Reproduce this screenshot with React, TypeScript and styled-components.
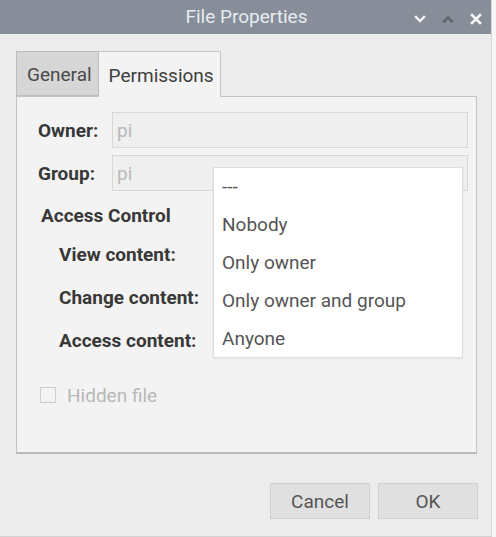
import React from "react";
import styled, { createGlobalStyle } from "styled-components";

const Global = createGlobalStyle`
  html, body { margin: 0; padding: 0; background: #f5f5f5; }
  body { font-family: Roboto, "Noto Sans", "Liberation Sans", sans-serif; }
  * { box-sizing: border-box; }
`;

const Window = styled.div`
  width: 492px;
  height: 537px;
  background: #ececec;
  border-right: 1px solid #d6d6d6;
  border-bottom: 1px solid #d2d2d2;
  display: flex;
  flex-direction: column;
`;

const TitleBar = styled.div`
  height: 34px;
  flex: none;
  background: #878e99;
  display: grid;
  grid-template-columns: 1fr auto 1fr;
  align-items: center;
`;

const Title = styled.div`
  grid-column: 2;
  color: #e8ebef;
  font-size: 19px;
  line-height: 34px;
  padding-left: 2px;
`;

const Controls = styled.div`
  grid-column: 3;
  justify-self: end;
  display: flex;
  gap: 6px;
  padding-right: 4px;
`;

const CtlButton = styled.div<{ $dim?: boolean }>`
  width: 22px;
  height: 22px;
  display: flex;
  align-items: center;
  justify-content: center;
  color: ${(p) => (p.$dim ? "#5e6570" : "#f4f6f8")};
  margin-top: 3px;
`;

const Body = styled.div`
  flex: 1;
  display: flex;
  flex-direction: column;
  padding: 17px 14px 0 16px;
`;

const Tabs = styled.div`
  display: flex;
  height: 45px;
`;

const Tab = styled.div<{ $active?: boolean }>`
  height: ${(p) => (p.$active ? "46px" : "45px")};
  padding: 2px 6px 0 10px;
  display: flex;
  align-items: center;
  font-size: 19px;
  color: ${(p) => (p.$active ? "#3d3d3d" : "#4a4a4a")};
  background: ${(p) => (p.$active ? "#f3f3f3" : "#d6d6d6")};
  border: 1px solid ${(p) => (p.$active ? "#c6c6c6" : "#bdbdbd")};
  border-bottom: ${(p) => (p.$active ? "none" : "1px solid #bdbdbd")};
  border-left: ${(p) => (p.$active ? "none" : "1px solid #bdbdbd")};
  position: relative;
  z-index: 1;
`;

const Frame = styled.div`
  position: relative;
  height: 358px;
  background: #f3f3f3;
  border: 1px solid #c4c4c4;
  border-bottom: 2px solid #b9b9b9;
  padding: 15px 8px 0 21px;
  display: flex;
  flex-direction: column;
`;

const FieldRow = styled.div`
  display: grid;
  grid-template-columns: 74px 1fr;
  align-items: center;
  height: 36px;
  & + & { margin-top: 7px; }
`;

const BoldLabel = styled.div<{ $indent?: number }>`
  font-weight: 700;
  font-size: 19px;
  color: #383838;
  padding-left: ${(p) => p.$indent ?? 0}px;
  white-space: nowrap;
`;

const Entry = styled.div`
  height: 36px;
  background: #efefef;
  border: 1px solid #d7d7d7;
  font-size: 19px;
  color: #b9b9b9;
  padding-left: 4px;
  display: flex;
  align-items: center;
`;

const Section = styled.div`
  margin-top: 13px;
  height: 22px;
  display: flex;
  align-items: center;
`;

const PermRows = styled.div`
  margin-top: 7px;
  display: flex;
  flex-direction: column;
`;

const PermRow = styled.div`
  height: 43px;
  display: flex;
  align-items: center;
`;

const CheckRow = styled.div`
  margin-top: 22px;
  height: 22px;
  display: flex;
  align-items: center;
  gap: 11px;
  padding-left: 2px;
`;

const CheckBox = styled.div`
  width: 16px;
  height: 16px;
  border: 1px solid #cfcfcf;
  background: #f3f3f3;
`;

const CheckText = styled.div`
  font-size: 19px;
  color: #b8b8b8;
`;

const Popup = styled.div`
  position: absolute;
  left: 196px;
  top: 70px;
  width: 250px;
  height: 191px;
  background: #ffffff;
  border: 1px solid #dedede;
  box-shadow: 0 1px 2px rgba(0, 0, 0, 0.08);
  display: flex;
  flex-direction: column;
`;

const MenuItem = styled.div`
  height: 38px;
  padding-left: 8px;
  display: flex;
  align-items: center;
  font-size: 19px;
  color: #555555;
`;

const ButtonBar = styled.div`
  margin-top: 29px;
  display: flex;
  justify-content: flex-end;
  gap: 8px;
  margin-right: -1px;
`;

const Button = styled.div`
  width: 100px;
  height: 36px;
  background: #e0e0e0;
  border: 1px solid #cfcfcf;
  display: flex;
  align-items: center;
  justify-content: center;
  font-size: 19px;
  color: #555555;
`;

const Chevron = ({ up }: { up?: boolean }) => (
  <svg width="12" height="8" viewBox="0 0 12 8">
    <path
      d={up ? "M2 6.5 L6 2.5 L10 6.5" : "M2 2 L6 6 L10 2"}
      fill="none"
      stroke="currentColor"
      strokeWidth="2.4"
      strokeLinecap="square"
    />
  </svg>
);

const Close = () => (
  <svg width="12" height="12" viewBox="0 0 12 12">
    <path d="M2 2 L10 10 M10 2 L2 10" stroke="currentColor" strokeWidth="2.6" strokeLinecap="square" />
  </svg>
);

export default function App() {
  return (
    <>
      <Global />
      <Window>
        <TitleBar>
          <Title>File Properties</Title>
          <Controls>
            <CtlButton><Chevron /></CtlButton>
            <CtlButton $dim><Chevron up /></CtlButton>
            <CtlButton><Close /></CtlButton>
          </Controls>
        </TitleBar>
        <Body>
          <Tabs>
            <Tab>General</Tab>
            <Tab $active>Permissions</Tab>
          </Tabs>
          <Frame>
            <FieldRow>
              <BoldLabel>Owner:</BoldLabel>
              <Entry>pi</Entry>
            </FieldRow>
            <FieldRow>
              <BoldLabel>Group:</BoldLabel>
              <Entry>pi</Entry>
            </FieldRow>
            <Section>
              <BoldLabel $indent={3}>Access Control</BoldLabel>
            </Section>
            <PermRows>
              <PermRow><BoldLabel $indent={21}>View content:</BoldLabel></PermRow>
              <PermRow><BoldLabel $indent={21}>Change content:</BoldLabel></PermRow>
              <PermRow><BoldLabel $indent={21}>Access content:</BoldLabel></PermRow>
            </PermRows>
            <CheckRow>
              <CheckBox />
              <CheckText>Hidden file</CheckText>
            </CheckRow>
            <Popup>
              <MenuItem>---</MenuItem>
              <MenuItem>Nobody</MenuItem>
              <MenuItem>Only owner</MenuItem>
              <MenuItem>Only owner and group</MenuItem>
              <MenuItem>Anyone</MenuItem>
            </Popup>
          </Frame>
          <ButtonBar>
            <Button>Cancel</Button>
            <Button>OK</Button>
          </ButtonBar>
        </Body>
      </Window>
    </>
  );
}
